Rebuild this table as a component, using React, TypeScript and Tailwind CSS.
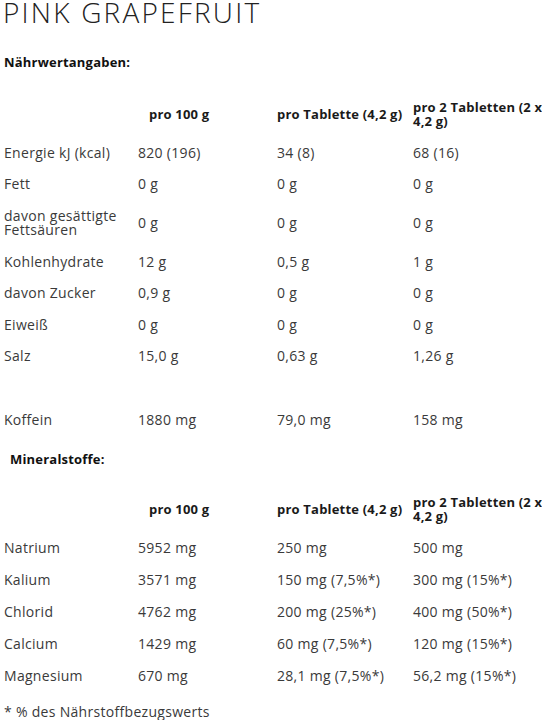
import React from 'react';

type Row = [string, string, string, string];

const naehrwerte: Row[] = [
  ['Energie kJ (kcal)', '820 (196)', '34 (8)', '68 (16)'],
  ['Fett', '0 g', '0 g', '0 g'],
  ['davon gesättigte Fettsäuren', '0 g', '0 g', '0 g'],
  ['Kohlenhydrate', '12 g', '0,5 g', '1 g'],
  ['davon Zucker', '0,9 g', '0 g', '0 g'],
  ['Eiweiß', '0 g', '0 g', '0 g'],
  ['Salz', '15,0 g', '0,63 g', '1,26 g'],
  ['\u00a0', '', '', ''],
  ['Koffein', '1880 mg', '79,0 mg', '158 mg'],
];

const mineralstoffe: Row[] = [
  ['Natrium', '5952 mg', '250 mg', '500 mg'],
  ['Kalium', '3571 mg', '150 mg (7,5%*)', '300 mg (15%*)'],
  ['Chlorid', '4762 mg', '200 mg (25%*)', '400 mg (50%*)'],
  ['Calcium', '1429 mg', '60 mg (7,5%*)', '120 mg (15%*)'],
  ['Magnesium', '670 mg', '28,1 mg (7,5%*)', '56,2 mg (15%*)'],
];

const NutritionTable = ({ rows, tight }: { rows: Row[]; tight?: boolean }) => (
  <table className="w-full table-fixed border-collapse text-[14px] leading-[14px] tracking-[0.3px] text-[#3a3a3a]">
    <colgroup>
      <col className="w-[134px]" />
      <col className="w-[139px]" />
      <col className="w-[136px]" />
      <col />
    </colgroup>
    <thead>
      <tr className="text-[13px] font-bold tracking-[0.2px] text-[#1a1a1a]">
        <th className="py-[9px] pl-[4px]"></th>
        <th className="py-[9px] pl-[15px] text-left align-middle font-bold">pro 100 g</th>
        <th className="py-[9px] pl-[4px] text-left align-middle font-bold whitespace-nowrap">pro Tablette (4,2 g)</th>
        <th className="py-[9px] pl-[4px] text-left align-middle font-bold whitespace-nowrap">
          pro 2 Tabletten (2 x<br />4,2 g)
        </th>
      </tr>
    </thead>
    <tbody>
      {rows.map((r, i) => (
        <tr key={i}>
          <td className={`${tight ? 'py-[9px]' : 'py-[8.8px]'} pl-[4px] pr-2 align-middle`}>{r[0]}</td>
          <td className={`${tight ? 'py-[9px]' : 'py-[8.8px]'} pl-[4px] align-middle`}>{r[1]}</td>
          <td className={`${tight ? 'py-[9px]' : 'py-[8.8px]'} pl-[4px] align-middle`}>{r[2]}</td>
          <td className={`${tight ? 'py-[9px]' : 'py-[8.8px]'} pl-[4px] align-middle whitespace-nowrap`}>{r[3]}</td>
        </tr>
      ))}
    </tbody>
  </table>
);

export default function App() {
  return (
    <div className="w-[542px] h-[720px] overflow-hidden bg-white font-['Open_Sans',sans-serif]">
      <div className="-mt-[5px] pl-[3px] text-[28px] leading-[34px] font-light tracking-[2.2px] text-[#222]">
        PINK GRAPEFRUIT
      </div>
      <div className="mt-[26px] pl-[4px] text-[13px] leading-[14px] font-bold tracking-[0.2px] text-[#111]">Nährwertangaben:</div>
      <div className="mt-[22px]">
        <NutritionTable rows={naehrwerte} />
      </div>
      <div className="mt-[17px] pl-[10px] text-[13px] leading-[14px] font-bold tracking-[0.2px] text-[#111]">Mineralstoffe:</div>
      <div className="mt-[20px]">
        <NutritionTable rows={mineralstoffe} tight />
      </div>
      <div className="mt-[13px] pl-[4px] text-[14px] leading-[14px] tracking-[0.3px] text-[#3a3a3a]">* % des Nährstoffbezugswerts</div>
    </div>
  );
}
